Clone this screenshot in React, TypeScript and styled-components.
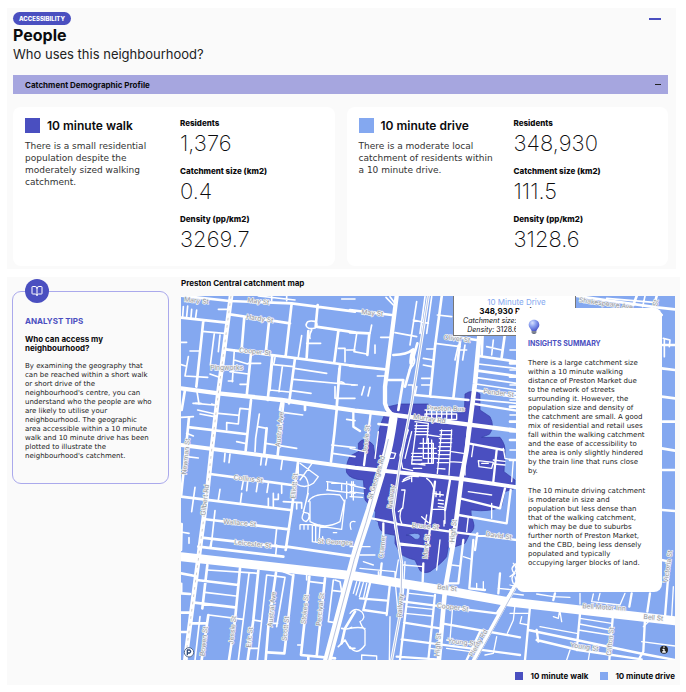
import React from "react";
import styled, { createGlobalStyle } from "styled-components";
import { BookOpen } from "lucide-react";

const WALK = "#4a4fc0";
const DRIVE = "#84a8f0";

const GlobalStyle = createGlobalStyle`
  * { box-sizing: border-box; }
  body { margin: 0; background: #fff; color: #0b0b0d; font-family: Inter, "Liberation Sans", sans-serif; }
  h1, h2, h3, p, dl, dd, dt, figure { margin: 0; }
  button { font: inherit; color: inherit; border: 0; background: none; cursor: pointer; padding: 0; }
`;

const Page = styled.main`
  display: flex;
  flex-direction: column;
  gap: 8px;
  padding: 8px 6px 7px 7px;
`;

const Overview = styled.section`
  background: #fafafa;
  margin-right: 4px;
  padding: 4px 8px 3px 6px;
`;

const Heading = styled.header`
  display: flex;
  justify-content: space-between;
  align-items: flex-start;
`;

const Tag = styled.span`
  display: block;
  width: max-content;
  padding: 0 6px;
  border-radius: 8px;
  background: ${WALK};
  color: #fff;
  font-size: 6px;
  font-weight: 800;
  line-height: 13px;
`;

const Title = styled.h1`
  font-size: 16px;
  font-weight: 700;
  line-height: 20px;
`;

const Subtitle = styled.p`
  font-size: 13px;
  line-height: 18px;
  color: #222;
`;

const Toggle = styled.button<{ $wide?: boolean }>`
  display: flex;
  align-items: center;
  width: ${(p) => (p.$wide ? 12 : 6)}px;
  height: 13px;
  margin-right: 7px;

  &::before {
    content: "";
    width: 100%;
    height: ${(p) => (p.$wide ? 2 : 1)}px;
    background: ${(p) => (p.$wide ? WALK : "#222")};
  }
`;

const ProfileBar = styled.div`
  display: flex;
  align-items: center;
  justify-content: space-between;
  height: 19px;
  margin-top: 12px;
  padding-left: 12px;
  background: #a6a6df;
`;

const BarTitle = styled.h2`
  font-size: 8px;
  font-weight: 700;
`;

const Cards = styled.div`
  display: grid;
  grid-template-columns: 1fr 1fr;
  gap: 12px;
  margin-top: 13px;
`;

const Card = styled.article`
  display: grid;
  grid-template-columns: 143px 1fr;
  gap: 12px;
  padding: 10px 12px 13px;
  border-radius: 8px;
  background: #fff;
`;

const CardTitle = styled.h3`
  display: flex;
  align-items: center;
  gap: 7px;
  height: 16px;
  font-size: 12px;
  font-weight: 600;
`;

const Swatch = styled.span<{ $color: string; $small?: boolean }>`
  width: ${(p) => (p.$small ? 8 : 15)}px;
  height: ${(p) => (p.$small ? 8 : 15)}px;
  background: ${(p) => p.$color};
`;

const CardText = styled.p`
  margin-top: 7px;
  font-family: "DejaVu Sans", sans-serif;
  font-size: 9px;
  line-height: 12px;
  color: #333;
  white-space: pre-line;
`;

const Stats = styled.dl`
  display: flex;
  flex-direction: column;
  gap: 8px;
`;

const StatName = styled.dt`
  font-size: 8px;
  font-weight: 800;
  line-height: 12px;
`;

const StatValue = styled.dd`
  font-size: 22px;
  font-weight: 200;
  line-height: 28px;
`;

const Catchment = styled.section`
  display: grid;
  grid-template-columns: 157px 1fr;
  gap: 12px;
  padding: 0 5px 3px 5px;
  background: #fafafa;
`;

const Tips = styled.aside`
  align-self: start;
  position: relative;
  height: max-content;
  margin-top: 14px;
  padding: 23px 10px 22px 12px;
  border: 1px solid #aaa9ec;
  border-radius: 9px;
`;

const TipsBadge = styled.span`
  position: absolute;
  top: -13px;
  left: 12px;
  display: grid;
  place-items: center;
  width: 24px;
  height: 24px;
  border-radius: 50%;
  background: ${WALK};
  color: #fff;
`;

const TipsTitle = styled.h2`
  font-size: 8px;
  font-weight: 700;
  line-height: 12px;
  color: ${WALK};
`;

const TipsQuestion = styled.h3`
  margin: 8px 0 9px;
  font-size: 8px;
  font-weight: 700;
  line-height: 9px;
`;

const Small = styled.p`
  font-family: "DejaVu Sans", sans-serif;
  font-size: 7px;
  line-height: 9px;
  color: #222;
  white-space: nowrap;
`;

const MapColumn = styled.div`
  min-width: 0;
`;

const MapTitle = styled.h2`
  height: 19px;
  font-size: 8px;
  font-weight: 700;
  line-height: 13px;
`;

const MapFrame = styled.figure`
  position: relative;
  overflow: hidden;
`;

const MapDrawing = styled.svg`
  display: block;
  width: 100%;
  height: auto;
  background: ${DRIVE};

  path { fill: none; stroke: #fff; stroke-linecap: round; stroke-linejoin: round; }
  .area { fill: ${WALK}; stroke: #3439a5; stroke-width: 2; }
  .hole { fill: ${DRIVE}; stroke: #3439a5; stroke-width: 2; }
  .rail { stroke: #b9c4df; stroke-width: 3; }
  .rail-tie { stroke: #cfcfd4; stroke-width: 3; stroke-dasharray: 8 14; stroke-linecap: butt; }
  text {
    fill: #92959c; stroke: #f4f5f8; stroke-width: 4; paint-order: stroke;
    font-size: 20px; text-anchor: middle; dominant-baseline: middle;
  }
`;

const Popup = styled.div`
  position: absolute;
  top: -1px;
  right: 99px;
  width: 123px;
  padding: 2px 0 1px 4px;
  border: 1px solid #777;
  background: #fff;
  font-size: 7px;
  line-height: 9px;
  text-align: center;
  white-space: nowrap;
`;

const PopupTitle = styled.p`
  color: ${DRIVE};
  font-size: 8px;
`;

const PopupCount = styled.p`
  font-size: 8px;
  font-weight: 700;
`;

const Insights = styled.aside`
  position: absolute;
  top: 12px;
  right: 13px;
  width: 146px;
  display: flex;
  flex-direction: column;
  gap: 11px;
  padding: 11px 10px 24px 12px;
  border-radius: 8px;
  background: #fff;
`;

const InsightsTitle = styled.h2`
  margin: -7px 0 0;
  font-size: 7px;
  font-weight: 700;
  line-height: 9px;
  color: ${WALK};
`;

const Legend = styled.ul`
  display: flex;
  justify-content: flex-end;
  gap: 12px;
  margin: 10px 0 0;
  padding: 0;
  list-style: none;
  font-size: 8px;
  font-weight: 700;
  line-height: 12px;
`;

const LegendItem = styled.li`
  display: flex;
  align-items: center;
  gap: 7px;
`;

type Label = [text: string, x: number, y: number, angle: number];

const labels: Label[] = [
  ["May St", 232, 17, 7], ["Hardy St", 236, 69, 8], ["Cooper St", 222, 168, 6],
  ["Pingworks", 137, 218, 0], ["May St", 574, 52, 6], ["Oliver St", 828, 129, 7],
  ["Pender St", 953, 292, 7], ["Shakespeare Ave", 1275, 24, 8], ["Mary St", 46, 15, 6],
  ["Collins St", 202, 550, 6], ["Wallace St", 176, 682, 5], ["Leicester St", 215, 745, 6],
  ["Murray Rd", 745, 370, 8], ["Preston Bus", 795, 339, 2], ["Bruce St", 733, 692, 4],
  ["David St", 953, 720, 8], ["St Georges", 462, 739, 3],
  ["Bell St", 798, 877, 6], ["Cooper St", 815, 935, 7], ["Young St", 842, 1040, 6],
  ["Bell Motor Inn", 1269, 935, 3], ["Bell St", 1417, 966, 6], ["Young St", 1210, 1054, 8],
  ["St Georges Rd", 587, 545, -73], ["Railway", 632, 602, -82], ["High St", 818, 705, -84],
  ["Gilbert Rd", 73, 612, -83], ["Newman St", 16, 482, -84], ["Austral Ave", 297, 400, -84],
  ["Elliott St", 341, 570, -84], ["Jessie St", 557, 430, -84], ["Cramer", 605, 752, -84],
  ["Mary St", 737, 752, -84], ["Bowen St", 70, 1036, -84], ["Jessie St", 156, 1002, -84],
  ["Eric St", 207, 1024, -84], ["Austral Ave", 274, 940, -84], ["Scott St", 315, 998, -84],
  ["Stokes St", 373, 940, -84], ["Percival St", 419, 940, -84], ["Railway", 659, 928, -86],
  ["High St", 772, 1046, -86], ["Plenty Rd", 893, 1042, -60], ["Victoria St", 1462, 812, -82],
  ["Clifton St", 1289, 1036, -84], ["Albert St", 1420, 52, -80],
];

const CatchmentMap = () => (
  <MapDrawing viewBox="0 0 1482 1092" role="img" aria-label="Walking and driving catchments around Preston Central">
    <path className="area" d="M622 332L657 324H742V352L850 350L852 294Q875 278 897 294V342L927 362Q943 393 925 415L902 424H957Q975 446 972 472L969 527L1002 552L1000 578L972 587L962 630Q930 650 870 642Q868 660 877 678Q884 700 867 712L852 742L822 752H802L797 782Q784 800 747 827Q733 834 717 824L702 792Q672 785 657 772L642 742V718L610 712Q592 700 592 677L582 672L584 648L552 612L547 552Q507 550 497 530Q492 510 507 480L532 467V442Q550 417 577 447L582 480L592 412Q600 375 622 332Z" />
    <path className="hole" d="M677 717Q705 707 717 716Q720 732 702 730Q690 716 677 717Z" />

    {/* north-west blocks */}
    <g transform="translate(-18 -78)">
      <path strokeWidth="8" d="M18 77L164 93L350 100L540 125M18 143L155 158M165 133L345 160M152 238L345 262L540 288M85 152L64 350M208 140L200 238M282 155L272 252M350 100L332 258M428 105L422 170L540 187M400 183L395 262M490 183L478 275M228 250L215 378M292 258L278 390M360 265L342 400M495 285L485 415M320 395L315 420M390 405V420M30 360L20 420" />
      <path strokeWidth="5" d="M25 110L23 140M38 108L35 140M50 118L48 142M65 120L62 142M130 118H158M250 78L360 90M500 87H540M290 78V92M335 78V92M82 184L148 190M118 190L106 285M135 195L130 245M18 217H35M45 243H72M40 260L30 318M18 284L32 288M30 318L98 322M178 240L172 335M178 270L218 282M165 305L220 312M220 280H257M195 343H215M160 333H174M105 312L133 322M300 262L296 284L356 290M322 290L312 365M292 285L285 362M285 360L342 366M358 295L455 310M355 328L540 345M348 362L408 370M380 197L370 260M395 220H437M490 235H510V275M515 240H540M395 160Q397 150 420 154Q432 165 420 174Q395 180 393 165ZM410 180Q402 195 405 205M492 295L488 340Q500 330 510 342M66 365L72 402M110 402L128 408M54 400H78M480 350V385H540" />
    </g>

    {/* north blocks */}
    <g transform="translate(507 -78)">
      <path strokeWidth="8" d="M0 120L125 135M0 187L58 190L52 255M0 287L105 298M275 80L255 230L240 380M310 200L380 210M330 215L310 385M195 375L355 390M130 255Q170 255 190 238Q180 260 182 280M202 220L165 350M115 330H160L145 420M385 258L500 275M382 302L500 318M375 360L500 382M398 190L395 258M465 190L455 262" />
      <path strokeWidth="5" d="M108 82L130 105M120 80L135 100M200 95L180 225M190 150L235 160M135 188L200 200M262 135L305 140M65 165L60 190M20 192L12 245L50 252M92 202H120M75 225V250M82 318H108M5 345H22M42 350L35 375M60 352L54 378M185 245Q200 265 190 285L178 300M175 345H188V370M200 350L195 375M230 237H255M220 265L250 270M220 285L245 290M215 325H240M215 345H240M255 220L330 230M325 225L315 270M345 225L338 270M330 240H350M410 230L455 240M430 210L425 255M385 282L500 295M380 323L500 340M378 342L500 360M375 388L500 400M225 80L210 190M245 80L230 190" />
    </g>

    {/* north-east blocks */}
    <g transform="translate(987 -78)">
      <path strokeWidth="8" d="M200 78L440 112L495 118M440 78L430 115L455 135M380 78L370 105M458 225H495M455 295L495 300M455 380L495 385M458 455H495M455 535L495 542M457 600H495M0 190H22M0 280H22M0 320H22M0 370H22M0 410H22M0 455H22M0 510H22M0 570H22" />
      <path strokeWidth="5" d="M290 85L440 98M405 78L398 110M460 205L480 210L478 230M463 210V260M0 240H22M0 300H22M0 345H22M0 390H22M0 435H22M0 485H22M0 540H22" />
    </g>

    {/* west blocks */}
    <g transform="translate(-18 312)">
      <path strokeWidth="8" d="M228 0L212 152M325 10L308 165M485 30L478 100L468 185M275 85L268 160M45 82L212 102M105 222L350 255M18 290L345 330M85 357L342 388M80 413L335 442M42 52L18 290M370 180L350 330L332 450M20 372L18 450" />
      <path strokeWidth="5" d="M62 10L115 15M68 30L120 42M75 42L118 50M18 52L55 50M35 100L55 108M130 40L192 46L195 25L225 28M155 68L190 72L192 46M155 68V90M253 42L242 115L240 155M248 80L275 85M328 38L383 45M272 130L365 145M185 125L210 130M470 135L540 143M472 160L540 170M515 58L540 62M485 0V15M150 160L148 185M165 162L162 188M260 170L257 195M276 172L272 195M322 180L318 208M35 170L70 174M60 262L50 335M135 268L130 300M205 242L200 268M218 245L215 272M248 248L244 275M280 250L276 277M200 280L196 310M320 255V280M280 295V318M295 280V322M310 282V298H295M325 305L380 308V325M365 310V327M120 332L108 442M305 385L300 435M18 396L42 400M42 413V430" />
      <path strokeWidth="4" d="M375 190L430 230L415 250Q390 268 365 252M415 185L375 240M370 200V225Q395 220 400 255L398 280L385 340Q375 360 393 365Q407 355 400 340L388 337M400 280L385 335M400 305Q415 275 495 285L508 305L495 365Q450 390 405 365V305M375 375V388M387 375V388M399 375V388M376 374H410M412 375V425L432 428L435 375H410M422 375V425M410 375L500 388L510 300M455 245L540 255M455 270L540 280M458 245V270M470 250H500V270M515 245V295M530 245V290M528 388Q520 360 540 365M443 410V430M475 398H485" />
    </g>

    {/* centre */}
    <g transform="translate(507 312)">
      <path strokeWidth="7" d="M62 40L42 195M10 35V80L30 93M85 72L115 75M355 75L340 220M355 130L460 150M375 12L500 32M440 150L430 245M330 295L450 325L465 265M325 345L470 370L482 270M140 372L300 395L500 420M65 355L140 370M255 245L240 370M300 240L285 330M135 375L150 450M100 370V450M240 385L232 450M300 390V440M382 400L375 450M145 430L225 440" />
      <path strokeWidth="4" d="M175 90L150 165L158 205L188 212M185 95L165 175M200 70L185 190L225 195M195 65L235 70L230 130M195 77H235M195 86H235M195 95H235M195 104H235M270 92H305M270 104H305M268 116H305M268 128H305M266 140H303M265 152H300M265 164H300M262 176H297M262 188H295M185 160H215M185 170H215M185 180H215M185 192H215M305 90L297 225M275 90L262 220M235 105L268 110M210 130H250V190H215M220 115V175M235 115V190M245 120V188M205 145H258M205 160H260M220 175H260M190 205H215M262 205L285 207M305 155L340 160M300 185L335 187M230 30V55M245 30V55M260 30V55M275 30V55M290 30V55M305 30V55M225 42H320V58H225ZM225 30H320M370 135L365 170M385 182L430 187L425 205L387 200ZM395 190H415M430 180L465 184M432 192L465 195M465 175L490 180L485 245M460 145L465 175M155 270H165L158 325L145 335M160 240Q175 225 205 230M185 230V245M230 235Q245 245 250 262M157 245L180 235M155 370Q145 350 155 325M245 328H285V370M250 280L280 285M258 275V290M270 275V290M282 362V378M265 300L280 302M265 310L280 312M265 320L280 322M215 350L235 368M230 345L225 370M110 155L137 160L132 175H120M345 200V225M355 275L425 285M425 310V355M355 350L350 395M85 95L75 175M0 145L43 155M0 255L45 265M0 275L40 280M0 290L38 292M10 245V300M285 330V370" />
    </g>

    {/* south-west blocks */}
    <g transform="translate(-18 732)">
      <path strokeWidth="8" d="M70 20L325 50M335 20L540 50M195 85L180 240L162 360M250 92L235 240L218 360M303 98L280 260L272 360M355 105L328 340L278 337M403 110L378 345L480 355M450 115L425 350M18 100L60 108M65 120L190 135M58 188L180 202M45 250H95M97 75L82 205M100 225L80 360M18 160L45 162M18 218H42M18 276H38M540 215L510 265L500 310M400 350V360" />
      <path strokeWidth="5" d="M110 0L105 22M305 15L302 45M97 90L250 100M90 157L182 168M102 225L205 238M222 100L190 360M275 105L247 360M275 105L330 112L305 260M235 240L260 244M282 250H308M222 325H248M405 125L448 130M475 120L460 245L495 250M480 120L495 125L500 155L475 152M75 230L60 360M20 130V155M325 95L350 105M368 315H380M395 105V120M500 265Q520 270 530 262M490 320L510 300L525 325H540" />
    </g>

    {/* south blocks */}
    <g transform="translate(507 732)">
      <path strokeWidth="7" d="M175 145L150 360M162 185L440 220L500 130M162 248L270 265M155 298L510 345M140 350L260 358M275 250L510 292M95 70L90 115M120 130L110 225M30 175L112 182M60 130L40 210L110 220M255 165L235 360M390 275L350 360M450 100L445 160M370 0L358 145L405 150M340 0L325 130H295M220 70L218 125" />
      <path strokeWidth="4" d="M20 125L10 160M30 125L18 165M40 128L28 170M50 130L40 175M0 220Q15 200 35 215Q50 235 30 245Q35 260 45 270V315Q20 350 0 320M0 265Q25 260 45 265M35 345L80 348V360M35 345V360M178 160L250 168M170 200L250 208M165 220L245 228M240 325L262 328M308 200L300 300M290 300L400 318M290 325L385 338M440 220L455 195M495 195L490 240L472 280M440 290L430 340L405 345M150 15L235 22M270 0L260 90M0 20H60M30 45H75M40 65L70 75M30 85L135 95V120M85 95V115M160 75L220 80M305 75L330 78M340 50L365 58M445 145L495 150V135M415 183H435M380 130V145M400 125V150M145 60L135 120L145 225M165 65L160 160M120 230L118 360M500 70Q475 85 495 100Q480 110 490 130" />
    </g>

    {/* south-east blocks */}
    <g transform="translate(987 492)">
      <path strokeWidth="7" d="M60 440L45 600M212 440L200 570M310 450L298 600M405 475L400 575L385 600M365 400L358 440M55 510L400 582L495 600M80 540L205 570L395 598M135 400L130 420M457 150L495 153M455 300L478 305L465 470M420 400L412 455M80 510L85 545" />
      <path strokeWidth="4" d="M0 460H55M35 470L30 490L55 495M210 475L305 490M208 492L302 510M205 510L300 525M90 500L200 520M125 445H150L145 475L130 470M150 455L155 485M0 400L40 405M80 402L130 410L180 412M210 400V432M250 402L245 425L330 435L345 400M270 400L265 420M0 375Q25 385 15 350M10 310Q30 330 0 350M395 545L495 558M180 570L170 600M240 570L235 600M490 380L485 470M430 470L400 500" />
    </g>

    <path strokeWidth="13" d="M0 277L112 292L302 312L522 344L640 357L1007 404" />
    <path strokeWidth="12" d="M0 447L352 492L522 515L847 550L1007 574" />
    <path strokeWidth="13" d="M647 0L612 272V322Q620 350 637 357" />
    <path strokeWidth="27" d="M0 782L522 840L787 882L987 918L1482 974" />
    <path strokeWidth="25" d="M637 367Q625 450 612 492L567 642L527 762L437 1100" />
    <path strokeWidth="14" d="M897 100L882 262L857 462L842 542L817 742L792 882L773 1100" />
    <path strokeWidth="13" d="M1007 862L875 1100" />
    <path strokeWidth="14" d="M150 0L112 292L92 462L77 602L57 752L12 1100" />
    <path className="rail-tie" d="M150 0L112 292L92 462L77 602L57 752L12 1100" />
    <path strokeWidth="9" d="M742 0L692 322L657 502L637 642L652 742L662 800L660 940L632 1092" />
    <path className="rail" d="M742 0L692 322L657 502L637 642L652 742L662 800L660 940L632 1092" />
    <path className="rail" d="M622 430L600 520L555 680L520 790L440 1092M1005 875L885 1092" />

    {labels.map(([name, x, y, angle]) => (
      <text key={`${name}-${x}`} transform={`translate(${x} ${y}) rotate(${angle})`}>{name}</text>
    ))}

    <circle cx="24" cy="1069" r="14" fill="#fff" stroke="#52698f" strokeWidth="3" />
    <path d="M19 1076V1062H26Q32 1067 26 1071H20" style={{ stroke: "#334d79", strokeWidth: 4 }} />
    <circle cx="1449" cy="1061" r="12" fill="#222" />
    <path strokeWidth="4" d="M1449 1060V1068M1445 1068H1453M1446 1060H1449M1449 1053V1054" />
  </MapDrawing>
);

const Bulb = () => (
  <svg width="12" height="16" viewBox="0 0 36 48" aria-hidden="true">
    <defs>
      <radialGradient id="bulb" cx="35%" cy="28%" r="75%">
        <stop offset="0" stopColor="#d9e2ff" />
        <stop offset=".45" stopColor="#8aa0ef" />
        <stop offset="1" stopColor="#4a55c8" />
      </radialGradient>
    </defs>
    <path d="M18 2C8 2 2 9 2 18C2 26 9 29 11 36H25C27 29 34 26 34 18C34 9 28 2 18 2Z" fill="url(#bulb)" />
    <path d="M11 36H25V42Q18 48 11 42Z" fill="#606778" />
    <path d="M11 39H25" stroke="#b9bdcc" strokeWidth="2" />
  </svg>
);

interface Profile {
  name: string;
  color: string;
  text: string;
  stats: [string, string][];
}

const profiles: Profile[] = [
  {
    name: "10 minute walk",
    color: WALK,
    text: "There is a small residential\npopulation despite the\nmoderately sized walking\ncatchment.",
    stats: [["Residents", "1,376"], ["Catchment size (km2)", "0.4"], ["Density (pp/km2)", "3269.7"]],
  },
  {
    name: "10 minute drive",
    color: DRIVE,
    text: "There is a moderate local\ncatchment of residents within\na 10 minute drive.",
    stats: [["Residents", "348,930"], ["Catchment size (km2)", "111.5"], ["Density (pp/km2)", "3128.6"]],
  },
];

export default function App() {
  return (
    <>
      <GlobalStyle />
      <Page>
        <Overview>
          <Heading>
            <div>
              <Tag>ACCESSIBILITY</Tag>
              <Title>People</Title>
              <Subtitle>Who uses this neighbourhood?</Subtitle>
            </div>
            <Toggle $wide aria-label="Collapse People" />
          </Heading>
          <ProfileBar>
            <BarTitle>Catchment Demographic Profile</BarTitle>
            <Toggle aria-label="Collapse Catchment Demographic Profile" />
          </ProfileBar>
          <Cards>
            {profiles.map((profile) => (
              <Card key={profile.name}>
                <div>
                  <CardTitle><Swatch $color={profile.color} />{profile.name}</CardTitle>
                  <CardText>{profile.text}</CardText>
                </div>
                <Stats>
                  {profile.stats.map(([name, value]) => (
                    <div key={name}>
                      <StatName>{name}</StatName>
                      <StatValue>{value}</StatValue>
                    </div>
                  ))}
                </Stats>
              </Card>
            ))}
          </Cards>
        </Overview>

        <Catchment>
          <Tips>
            <TipsBadge><BookOpen size={12} strokeWidth={2} /></TipsBadge>
            <TipsTitle>ANALYST TIPS</TipsTitle>
            <TipsQuestion>Who can access my<br />neighbourhood?</TipsQuestion>
            <Small>
              By examining the geography that<br />can be reached within a short walk<br />or short drive of the<br />
              neighbourhood's centre, you can<br />understand who the people are who<br />are likely to utilise your<br />
              neighbourhood. The geographic<br />area accessible within a 10 minute<br />walk and 10 minute drive has been<br />
              plotted to illustrate the<br />neighbourhood's catchment.
            </Small>
          </Tips>
          <MapColumn>
            <MapTitle>Preston Central catchment map</MapTitle>
            <MapFrame>
              <CatchmentMap />
              <Popup>
                <PopupTitle>10 Minute Drive</PopupTitle>
                <PopupCount>348,930 Residents</PopupCount>
                <p><i>Catchment size:</i> 111.5 square km</p>
                <p><i>Density:</i> 3128.6 pp/square km</p>
              </Popup>
              <Insights>
                <Bulb />
                <InsightsTitle>INSIGHTS SUMMARY</InsightsTitle>
                <Small>
                  There is a large catchment size<br />within a 10 minute walking<br />distance of Preston Market due<br />
                  to the network of streets<br />surrounding it. However, the<br />population size and density of<br />
                  the catchment are small. A good<br />mix of residential and retail uses<br />fall within the walking catchment<br />
                  and the ease of accessibility to<br />the area is only slightly hindered<br />by the train line that runs close<br />by.
                </Small>
                <Small>
                  The 10 minute driving catchment<br />is moderate in size and<br />population but less dense than<br />
                  that of the walking catchment,<br />which may be due to suburbs<br />further north of Preston Market,<br />
                  and the CBD, being less densely<br />populated and typically<br />occupying larger blocks of land.
                </Small>
              </Insights>
            </MapFrame>
            <Legend>
              <LegendItem><Swatch $small $color={WALK} />10 minute walk</LegendItem>
              <LegendItem><Swatch $small $color={DRIVE} />10 minute drive</LegendItem>
            </Legend>
          </MapColumn>
        </Catchment>
      </Page>
    </>
  );
}
